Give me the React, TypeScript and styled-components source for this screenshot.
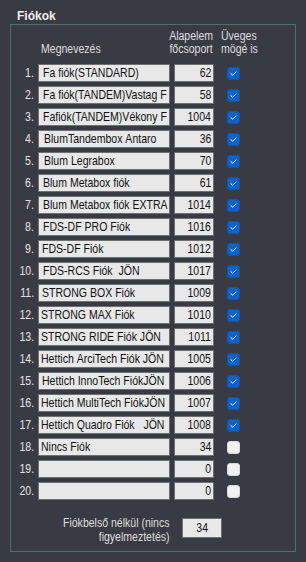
import React from "react";
import styled, { createGlobalStyle } from "styled-components";

const GlobalStyle = createGlobalStyle`
  html, body {
    margin: 0;
    padding: 0;
    background: #3a3a44;
  }
  body {
    font-family: "Liberation Sans", Arial, sans-serif;
    font-size: 13px;
    color: #e4e4e4;
  }
`;

// the source UI uses a narrow system font; squeeze the glyphs to match
const Squeeze = styled.span<{ origin?: string }>`
  display: inline-block;
  white-space: nowrap;
  transform: scaleX(0.81);
  transform-origin: ${p => p.origin || "left"} center;
`;

const Page = styled.div`
  width: 306px;
  height: 562px;
  box-sizing: border-box;
  overflow: hidden;
`;

const Title = styled.div`
  height: 24px;
  box-sizing: border-box;
  padding: 9px 0 0 17px;
  font-size: 12px;
  line-height: 14px;
  font-weight: bold;
  color: #f0f0f0;
`;

const Group = styled.div`
  margin-left: 10px;
  width: 286px;
  height: 528px;
  box-sizing: border-box;
  border: 1px solid #4a7370;
  display: flex;
  flex-direction: column;
`;

const Header = styled.div`
  display: flex;
  align-items: flex-end;
  height: 26px;
  margin-top: 4px;
  line-height: 13px;
  color: #dedede;
`;

const HeadName = styled.div`
  margin-left: 27px;
  width: 125px;
  box-sizing: border-box;
  padding-left: 3px;
`;

const HeadGroup = styled.div`
  width: 57px;
  text-align: center;
`;

const HeadGlass = styled.div`
  margin-left: 1px;
`;

const Rows = styled.div`
  display: flex;
  flex-direction: column;
  gap: 4px;
  margin-top: 9px;
`;

const Row = styled.div`
  display: flex;
  align-items: center;
  height: 18px;
`;

const Num = styled.div`
  width: 23px;
  margin-right: 4px;
  text-align: right;
  line-height: 16px;
`;

const Field = styled.div<{ w: number; align?: string; pad?: number }>`
  width: ${p => p.w}px;
  height: 18px;
  box-sizing: border-box;
  border: 1px solid #6f6f6f;
  background: #e8e8e8;
  color: #111;
  line-height: 16px;
  text-align: ${p => p.align || "left"};
  padding: 0 ${p => (p.align === "right" ? 2 : 0)}px 0 ${p => p.pad ?? 3}px;
  white-space: nowrap;
  overflow: hidden;
`;

const NameField = styled(Field)`
  margin-right: 4px;
`;

const Box = styled.div<{ checked: boolean }>`
  margin-left: 13px;
  width: 13px;
  height: 13px;
  border-radius: 3px;
  box-sizing: border-box;
  background: ${p => (p.checked ? "#1062c7" : "#f2f2f2")};
  border: 1px solid ${p => (p.checked ? "#0d57b3" : "#d8d8d8")};
  display: flex;
  align-items: center;
  justify-content: center;
`;

const Footer = styled.div`
  display: flex;
  align-items: flex-start;
  margin-top: 16px;
`;

const FooterLabel = styled.div`
  width: 159px;
  margin-right: 12px;
  text-align: right;
  line-height: 14px;
  color: #dedede;
`;

const FooterField = styled(Field)`
  height: 20px;
  margin-top: 2px;
  line-height: 18px;
`;

type Item = { name: string; group: number; glass: boolean; pad: number };

const items: Item[] = [
  { name: "Fa fiók(STANDARD)", group: 62, glass: true, pad: 4 },
  { name: "Fa fiók(TANDEM)Vastag F", group: 58, glass: true, pad: 4 },
  { name: "Fafiók(TANDEM)Vékony F", group: 1004, glass: true, pad: 4 },
  { name: "BlumTandembox Antaro", group: 36, glass: true, pad: 5 },
  { name: "Blum Legrabox", group: 70, glass: true, pad: 5 },
  { name: "Blum Metabox fiók", group: 61, glass: true, pad: 4 },
  { name: "Blum Metabox fiók EXTRA", group: 1014, glass: true, pad: 4 },
  { name: "FDS-DF PRO Fiók", group: 1016, glass: true, pad: 4 },
  { name: "FDS-DF Fiók", group: 1012, glass: true, pad: 3 },
  { name: "FDS-RCS Fiók  JÖN", group: 1017, glass: true, pad: 4 },
  { name: "STRONG BOX Fiók", group: 1009, glass: true, pad: 3 },
  { name: "STRONG MAX Fiók", group: 1010, glass: true, pad: 2 },
  { name: "STRONG RIDE Fiók JÖN", group: 1011, glass: true, pad: 2 },
  { name: "Hettich ArciTech Fiók JÖN", group: 1005, glass: true, pad: 2 },
  { name: "Hettich InnoTech FiókJÖN", group: 1006, glass: true, pad: 3 },
  { name: "Hettich MultiTech FiókJÖN", group: 1007, glass: true, pad: 2 },
  { name: "Hettich Quadro Fiók   JÖN", group: 1008, glass: true, pad: 2 },
  { name: "Nincs Fiók", group: 34, glass: false, pad: 2 },
  { name: "", group: 0, glass: false, pad: 2 },
  { name: "", group: 0, glass: false, pad: 2 },
];

const Check = () => (
  <svg width="7" height="5" viewBox="0 0 7 5">
    <polyline
      points="0.6,2.4 2.6,4.2 6.4,0.7"
      fill="none"
      stroke="#ffffff"
      strokeWidth="1"
    />
  </svg>
);

export default function App() {
  return (
    <Page>
      <GlobalStyle />
      <Title>Fiókok</Title>
      <Group>
        <Header>
          <HeadName>
            <Squeeze>Megnevezés</Squeeze>
          </HeadName>
          <HeadGroup>
            <Squeeze origin="center">
              Alapelem
              <br />
              főcsoport
            </Squeeze>
          </HeadGroup>
          <HeadGlass>
            <Squeeze>
              Üveges
              <br />
              mögé is
            </Squeeze>
          </HeadGlass>
        </Header>
        <Rows>
          {items.map((it, i) => (
            <Row key={i}>
              <Num>
                <Squeeze origin="right">{i + 1}.</Squeeze>
              </Num>
              <NameField w={132} pad={it.pad}>
                <Squeeze>{it.name.replace(/ /g, "\u00a0")}</Squeeze>
              </NameField>
              <Field w={40} align="right">
                <Squeeze origin="right">{it.group}</Squeeze>
              </Field>
              <Box checked={it.glass}>{it.glass && <Check />}</Box>
            </Row>
          ))}
        </Rows>
        <Footer>
          <FooterLabel>
            <Squeeze origin="right">
              Fiókbelső nélkül (nincs
              <br />
              figyelmeztetés)
            </Squeeze>
          </FooterLabel>
          <FooterField w={40} align="center" pad={0}>
            <Squeeze origin="center">34</Squeeze>
          </FooterField>
        </Footer>
      </Group>
    </Page>
  );
}
